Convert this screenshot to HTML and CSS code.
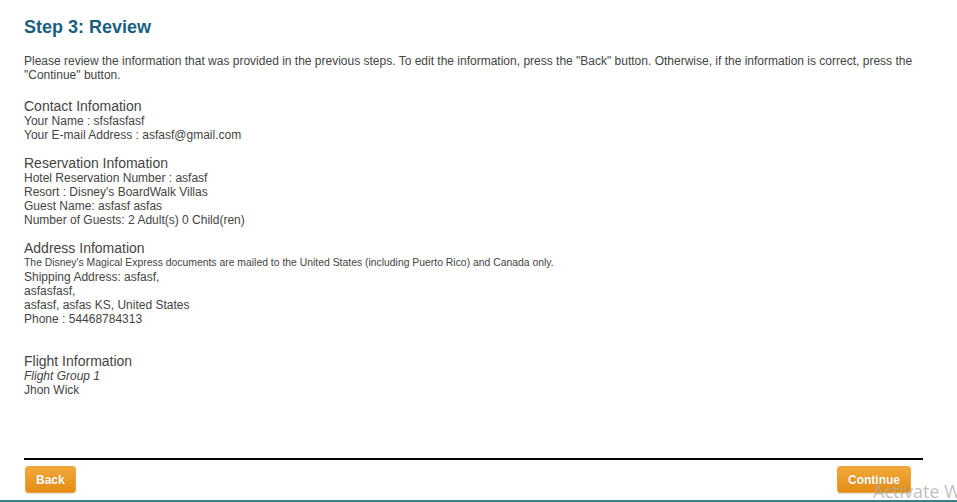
FILE: index.html
```html
<!DOCTYPE html>
<html>
<head>
<meta charset="utf-8">
<link rel="stylesheet" href="styles.css">
</head>
<body>
<div class="page">
  <h1 class="title">Step 3: Review</h1>
  <p class="intro">Please review the information that was provided in the previous steps. To edit the information, press the "Back" button. Otherwise, if the information is correct, press the "Continue" button.</p>

  <div class="section first">
    <div class="sec-head">Contact Infomation</div>
    <div class="line">Your Name : sfsfasfasf</div>
    <div class="line">Your E-mail Address : asfasf@gmail.com</div>
  </div>

  <div class="section">
    <div class="sec-head">Reservation Infomation</div>
    <div class="line">Hotel Reservation Number : asfasf</div>
    <div class="line">Resort : Disney's BoardWalk Villas</div>
    <div class="line">Guest Name: asfasf asfas</div>
    <div class="line">Number of Guests: 2 Adult(s) 0 Child(ren)</div>
  </div>

  <div class="section">
    <div class="sec-head">Address Infomation</div>
    <div class="note">The Disney's Magical Express documents are mailed to the United States (including Puerto Rico) and Canada only.</div>
    <div class="line">Shipping Address: asfasf,</div>
    <div class="line">asfasfasf,</div>
    <div class="line">asfasf, asfas KS, United States</div>
    <div class="line">Phone : 54468784313</div>
  </div>

  <div class="section flight">
    <div class="sec-head">Flight Information</div>
    <div class="line italic">Flight Group 1</div>
    <div class="line">Jhon Wick</div>
  </div>

  <div class="footer">
    <button class="btn">Back</button>
    <button class="btn">Continue</button>
  </div>
</div>
<div class="bottom-bar"></div>
<div class="watermark">Activate Windows</div>
</body>
</html>
```
FILE: styles.css
```css
html, body {
  margin: 0;
  padding: 0;
  background: #fff;
  overflow: hidden;
}
body {
  font-family: "Liberation Sans", Arial, sans-serif;
  color: #444;
  width: 957px;
  height: 502px;
  position: relative;
}
.page {
  width: 899px;
  padding: 16px 0 0 24px;
}
.title {
  margin: 0;
  font-size: 18px;
  line-height: 22px;
  font-weight: bold;
  color: #1b5f80;
}
.intro {
  margin: 16px 0 0 0;
  font-size: 12px;
  line-height: 14px;
}
.section {
  margin-top: 13px;
}
.section.first {
  margin-top: 16px;
}
.section.flight {
  margin-top: 27px;
}
.sec-head {
  font-size: 14px;
  line-height: 16px;
}
.line {
  font-size: 12px;
  line-height: 14px;
}
.note {
  font-size: 10.4px;
  line-height: 14px;
}
.italic {
  font-style: italic;
}
.footer {
  margin-top: 61px;
  border-top: 2px solid #000;
  padding-top: 6px;
  display: flex;
  justify-content: space-between;
  padding-left: 1px;
  padding-right: 12px;
}
.btn {
  font-family: "Liberation Sans", Arial, sans-serif;
  font-size: 12px;
  font-weight: bold;
  color: #fff;
  height: 27px;
  padding: 0 10px;
  border: 1px solid #e8a540;
  border-radius: 3px;
  background: linear-gradient(#f2a83a, #e48c14);
  box-shadow: 0 1px 1px rgba(0,0,0,0.15);
  text-shadow: 0 0 1px rgba(0,0,0,0.2);
}
.bottom-bar {
  position: absolute;
  left: 0;
  right: 0;
  bottom: 0;
  height: 2px;
  background: #3e7c86;
}
.watermark {
  position: absolute;
  left: 873px;
  top: 479px;
  font-family: "Open Sans", "DejaVu Sans", sans-serif;
  font-size: 18px;
  color: rgba(170,170,170,0.75);
  white-space: nowrap;
}
```
